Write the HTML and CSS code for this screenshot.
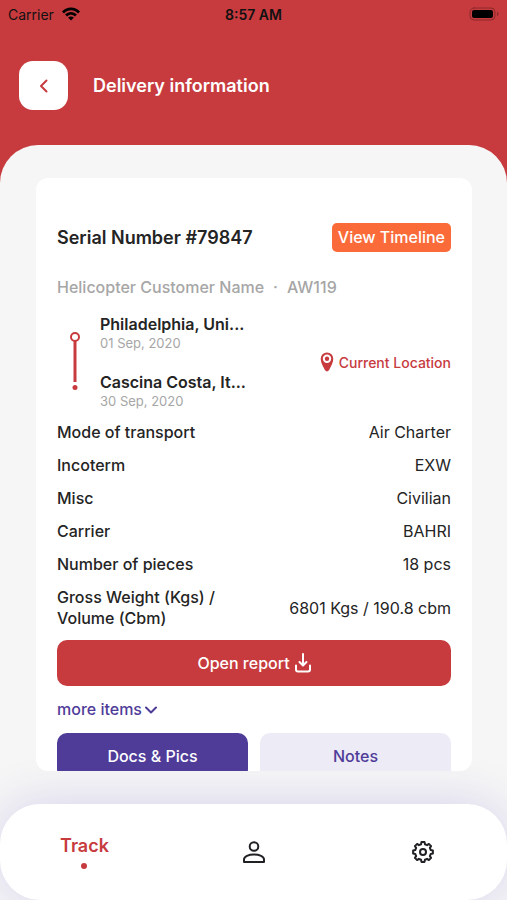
FILE: index.html
```
<!DOCTYPE html>
<html lang="en">
<head>
<meta charset="utf-8">
<meta name="viewport" content="width=device-width, initial-scale=1">
<title>Delivery information</title>
<link rel="stylesheet" href="styles.css">
</head>
<body>
<div class="screen">
  <div class="status">
    <div class="status-side">
      <span>Carrier</span>
      <svg class="wifi" viewBox="0 0 18 14" aria-hidden="true"><path d="M0 4.6C5-1 13-1 18 4.6L16 6.6C12 2.2 6 2.2 2 6.6ZM3.1 7.6C6.4 4.1 11.6 4.1 14.9 7.6L12.9 9.6C10.6 7.2 7.4 7.2 5.1 9.6ZM6.1 10.6C7.8 9 10.2 9 11.9 10.6L9 13.6Z"/></svg>
    </div>
    <span class="clock">8:57 AM</span>
    <div class="status-side status-end">
      <svg class="battery" viewBox="0 0 30 14" aria-hidden="true"><rect class="battery-case" x="1" y="1" width="25" height="12" rx="4"/><rect x="3" y="3" width="21" height="8" rx="2"/><path class="battery-tip" d="M28 5C30 5.500 30 8.500 28 9Z"/></svg>
    </div>
  </div>
  <header class="header">
    <button class="back" type="button" aria-label="Back">
      <svg viewBox="0 0 12 16" aria-hidden="true"><path d="M8.500 2.500L3 8L8.500 13.500"/></svg>
    </button>
    <h1>Delivery information</h1>
  </header>
  <main class="panel">
    <article class="card">
      <div class="card-head">
        <h2>Serial Number #79847</h2>
        <button class="timeline-btn" type="button">View Timeline</button>
      </div>
      <p class="customer"><span>Helicopter Customer Name</span><span>·</span><span>AW119</span></p>
      <div class="route">
        <svg class="track" viewBox="0 0 12 60" aria-hidden="true"><circle class="ring" cx="6" cy="5" r="4"/><path class="line" d="M6 9V50"/><circle class="dot" cx="6" cy="55.500" r="2.500"/></svg>
        <div class="stops">
          <div>
            <h3>Philadelphia, Uni...</h3>
            <p>01 Sep, 2020</p>
          </div>
          <div>
            <h3>Cascina Costa, It...</h3>
            <p>30 Sep, 2020</p>
          </div>
        </div>
        <a class="location" href="#location">
          <svg viewBox="0 0 14 20" aria-hidden="true"><path d="M7 .5A6.300 6.300 0 0 0 .7 6.800C.7 11 3.300 14.500 5 18.300Q7 20.500 9 18.300C10.700 14.500 13.300 11 13.300 6.800A6.300 6.300 0 0 0 7 .5Z"/><circle cx="7" cy="6.800" r="3.200"/></svg>
          <span>Current Location</span>
        </a>
      </div>
      <dl class="facts">
        <div><dt>Mode of transport</dt><dd>Air Charter</dd></div>
        <div><dt>Incoterm</dt><dd>EXW</dd></div>
        <div><dt>Misc</dt><dd>Civilian</dd></div>
        <div><dt>Carrier</dt><dd>BAHRI</dd></div>
        <div><dt>Number of pieces</dt><dd>18 pcs</dd></div>
        <div><dt>Gross Weight (Kgs) / Volume (Cbm)</dt><dd>6801 Kgs / 190.8 cbm</dd></div>
      </dl>
      <button class="report" type="button">Open report
        <svg viewBox="0 0 16 20" aria-hidden="true"><path d="M8 1V12M4.500 9L8 12.500L11.500 9M1 12.500V16.500Q1 18.500 3 18.500H13Q15 18.500 15 16.500V12.500"/></svg>
      </button>
      <button class="more" type="button">more items
        <svg viewBox="0 0 12 8" aria-hidden="true"><path d="M1 1.500L6 6.500L11 1.500"/></svg>
      </button>
      <div class="tabs">
        <button class="tab tab-active" type="button">Docs &amp; Pics</button>
        <button class="tab" type="button">Notes</button>
      </div>
    </article>
  </main>
  <nav class="nav">
    <a class="nav-active" href="#track">Track</a>
    <a href="#profile" aria-label="Profile">
      <svg class="person" viewBox="0 0 24 24" aria-hidden="true"><circle cx="12" cy="6.500" r="4.300"/><path d="M2 22V19.500C2 16.500 6.500 14.500 12 14.500S22 16.500 22 19.500V22Z"/></svg>
    </a>
    <a href="#settings" aria-label="Settings">
      <svg class="gear" viewBox="0 0 24 24" aria-hidden="true"><path d="M10.440 2.120H13.560L13.940 4.240L16.120 5.140L17.880 3.910L20.090 6.120L18.860 7.880L19.760 10.060L21.880 10.440V13.560L19.760 13.940L18.860 16.120L20.090 17.880L17.880 20.090L16.120 18.860L13.940 19.760L13.560 21.880H10.440L10.060 19.760L7.880 18.860L6.120 20.090L3.910 17.880L5.140 16.120L4.240 13.940L2.120 13.560V10.440L4.240 10.060L5.140 7.880L3.910 6.120L6.120 3.910L7.880 5.140L10.060 4.240Z"/><circle cx="12" cy="12" r="3"/></svg>
    </a>
  </nav>
</div>
</body>
</html>
```
FILE: styles.css
```
:root {
  --red: #c73b3e;
  --purple: #4f3c99;
  --ink: #242424;
  --muted: #a6a6a6;
}
* { box-sizing: border-box; }
body, h1, h2, h3, p, dl, dd { margin: 0; }
body {
  background: var(--red);
  color: var(--ink);
  font-family: Inter, "Liberation Sans", sans-serif;
  font-size: 16px;
  line-height: 21px;
}
button {
  border: 0;
  padding: 0;
  font: inherit;
  font-weight: 500;
  cursor: pointer;
}
a { color: inherit; text-decoration: none; }
svg { display: block; flex: none; fill: none; stroke-linecap: round; stroke-linejoin: round; }
.screen { display: flex; flex-direction: column; height: 100vh; }

.status { display: flex; align-items: center; height: 28px; padding: 0 8px; color: #111; font-size: 14px; }
.status-side { flex: 1; display: flex; align-items: center; gap: 8px; }
.status-end { justify-content: flex-end; }
.clock { font-weight: 600; }
.wifi { width: 18px; height: 14px; fill: #000; }
.battery { width: 30px; height: 14px; fill: #000; }
.battery-case { fill: none; stroke: #8c292b; }
.battery-tip { fill: #8c292b; }

.header { display: flex; align-items: center; gap: 25px; padding: 33px 19px 35px; color: #fff; }
.back { display: grid; place-items: center; width: 49px; height: 49px; border-radius: 14px; background: #fff; }
.back svg { width: 12px; height: 16px; stroke: var(--red); stroke-width: 2; }
h1 { font-size: 18px; font-weight: 600; }

.panel {
  flex: 1;
  min-height: 0;
  display: flex;
  padding: 33px 35px 33px 36px;
  background: #f6f6f6;
  border-radius: 38px 38px 0 0;
}
.card {
  position: relative;
  z-index: 1;
  flex: 1;
  min-width: 0;
  padding: 45px 21px 0;
  background: #fff;
  border-radius: 12px;
  overflow: hidden;
}
.card-head { display: flex; justify-content: space-between; align-items: center; height: 29px; }
h2 { font-size: 18px; font-weight: 600; }
.timeline-btn { height: 29px; padding: 0 6px; border-radius: 5px; background: #fb6b3a; color: #fff; }
.customer { display: flex; gap: 9px; margin-top: 25px; color: var(--muted); font-weight: 500; }

.route { display: flex; align-items: center; margin-top: 16px; }
.track { width: 12px; height: 60px; margin: 0 19px 0 12px; stroke-width: 2; }
.ring, .line { stroke: var(--red); }
.line { stroke-width: 3; stroke-linecap: butt; }
.dot { fill: var(--red); }
.stops { display: grid; gap: 20px; }
h3 { font-size: 16px; font-weight: 600; }
.stops p { color: var(--muted); font-size: 13px; line-height: 17px; }
.location { display: flex; align-items: center; gap: 5px; margin-left: auto; color: var(--red); font-size: 14px; font-weight: 500; }
.location svg { width: 14px; height: 20px; fill: var(--red); }
.location circle { stroke: #fff; stroke-width: 2; }

.facts { display: grid; gap: 12px; margin-top: 12px; }
.facts div { display: flex; justify-content: space-between; align-items: center; }
.facts dt { max-width: 175px; font-weight: 500; }

.report { display: flex; align-items: center; justify-content: center; gap: 5px; width: 100%; height: 46px; margin-top: 11px; border-radius: 10px; background: var(--red); color: #fff; }
.report svg { width: 16px; height: 20px; stroke: #fff; stroke-width: 2; }
.more { display: flex; align-items: center; gap: 3px; margin-top: 13px; background: none; color: var(--purple); }
.more svg { width: 12px; height: 8px; stroke: var(--purple); stroke-width: 2; }
.tabs { display: grid; grid-template-columns: 1fr 1fr; gap: 12px; margin-top: 13px; }
.tab { height: 46px; border-radius: 10px; background: #edebf5; color: var(--purple); }
.tab-active { background: var(--purple); color: #fff; }

.nav {
  display: grid;
  grid-template-columns: repeat(3, 1fr);
  place-items: center;
  height: 96px;
  border-radius: 40px;
  background: #fff;
  box-shadow: 0 0 50px #d5d0ea, 0 0 0 50px #f6f6f6;
}
.nav-active { display: grid; justify-items: center; gap: 7px; color: var(--red); font-size: 18px; font-weight: 600; }
.nav-active::after { content: ""; width: 6px; height: 6px; border-radius: 50%; background: var(--red); }
.person, .gear { width: 24px; height: 24px; stroke: #202124; stroke-width: 2; }
```
